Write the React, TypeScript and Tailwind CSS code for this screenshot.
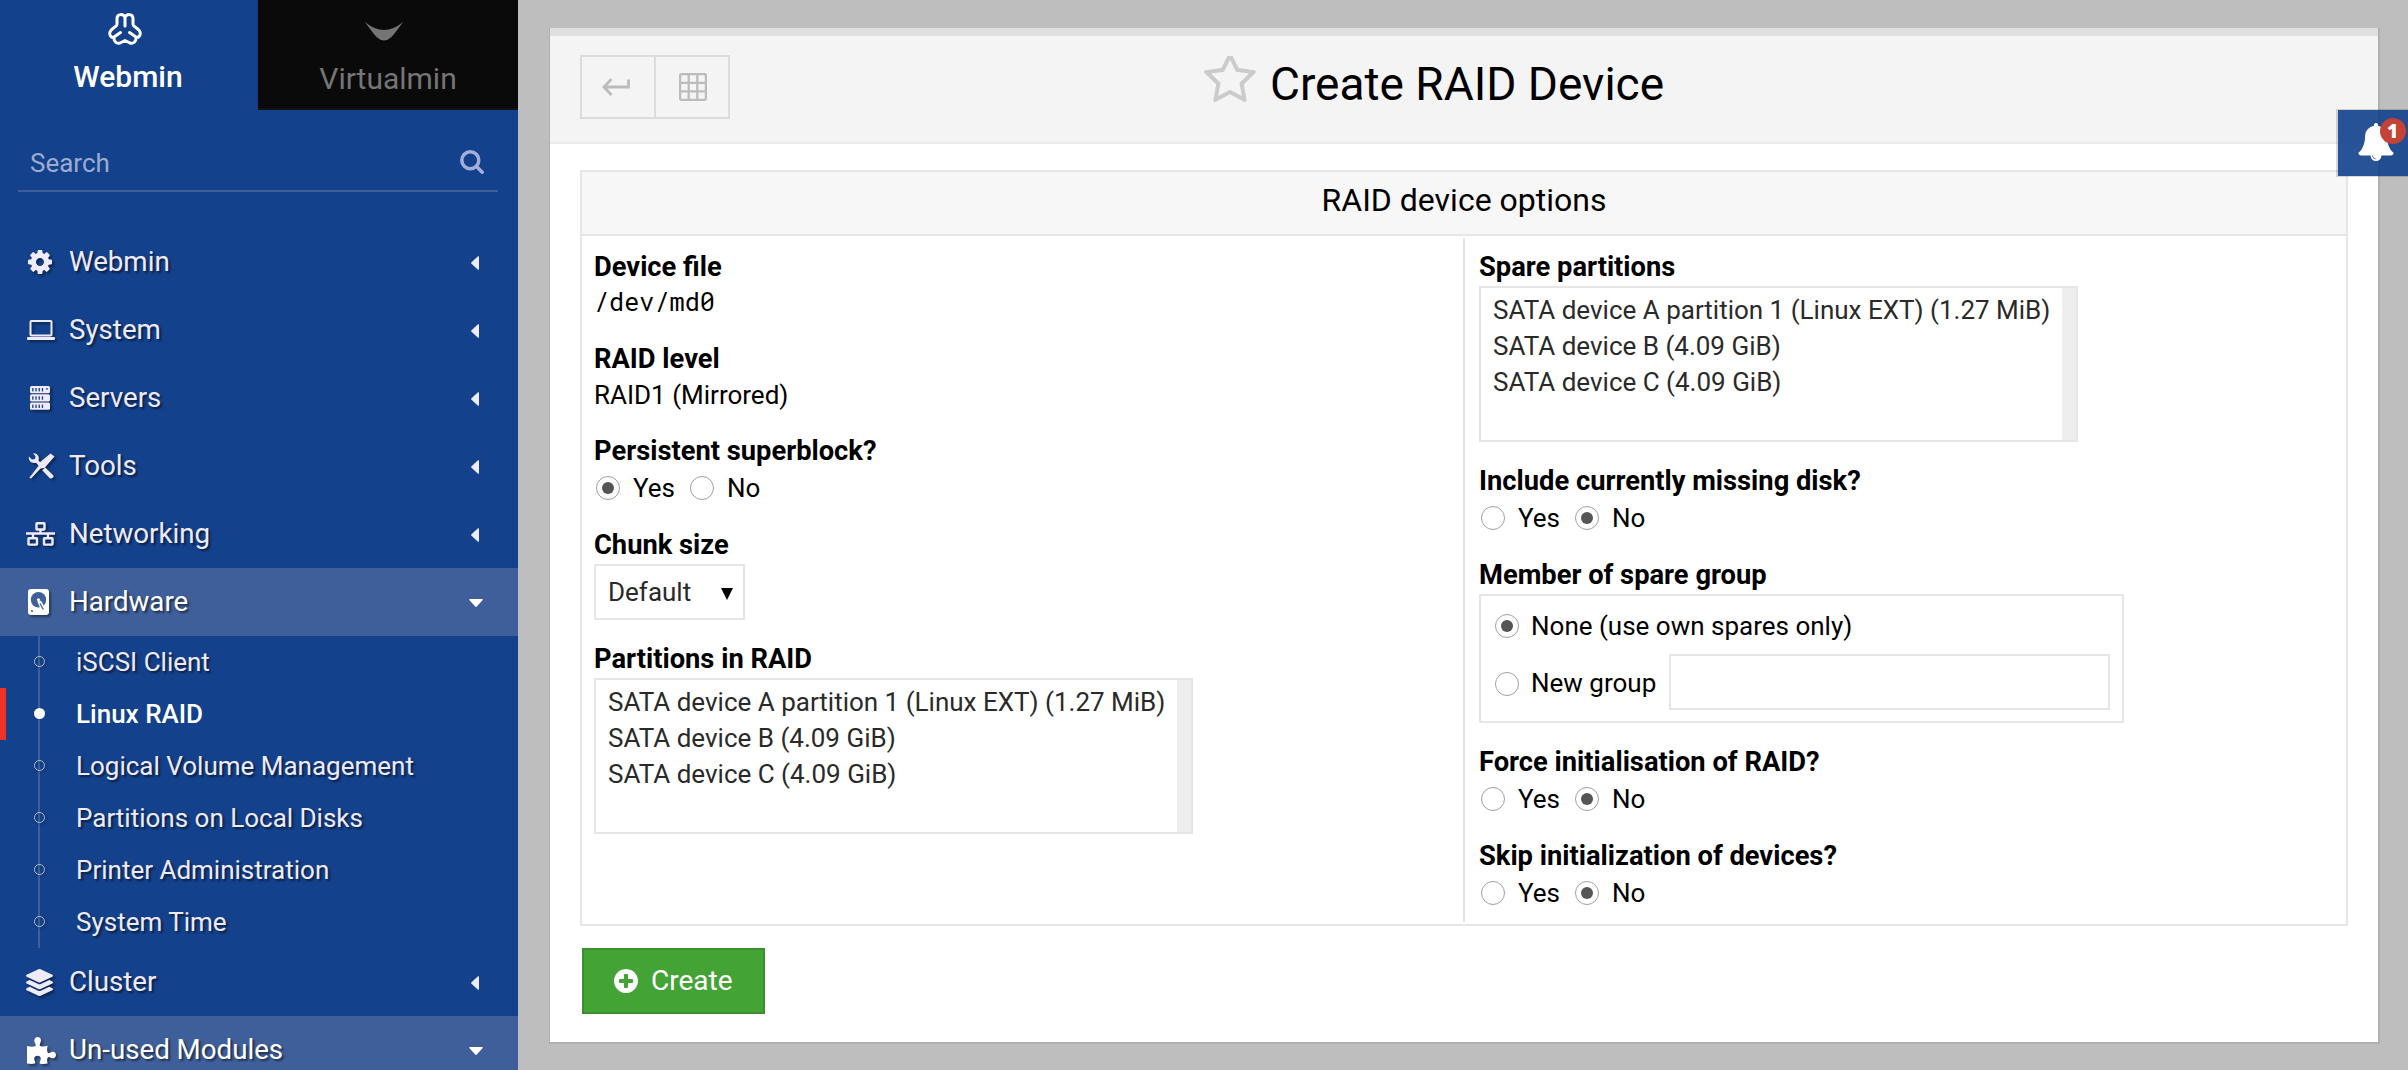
import React from "react";
import { FaLayerGroup } from "react-icons/fa";

const WebminLogo = () => (
  <svg viewBox="0 0 34 32" className="mr-[9px] h-8 w-[34px] fill-none stroke-white" strokeWidth="3" strokeLinecap="round" strokeLinejoin="round">
    <path d="M17 4.500C15.500 0.500 9 0.500 9 5.500V11.500C9 14 1.500 15.500 1.700 20.500C1.900 23.500 4 25 6 24C5.500 28 8.500 31.300 12 30L17 27.500L22 30C25.500 31.300 28.500 28 28 24C30 25 32.100 23.500 32.300 20.500C32.500 15.500 25 14 25 11.500V5.500C25 0.500 18.500 0.500 17 4.500V13M6 24L12.500 19.500M28 24L21.500 19.500" />
  </svg>
);

const GearIcon = () => (
  <svg viewBox="128 128 1536 1536" className="h-6 w-6 fill-current">
    <path d="M1152 896q0-106-75-181t-181-75-181 75-75 181 75 181 181 75 181-75 75-181zm512-109v222q0 12-8 23t-20 13l-185 28q-19 54-39 91 35 50 107 138 10 12 10 25t-9 23q-27 37-99 108t-94 71q-12 0-26-9l-138-108q-44 23-91 38-16 136-29 186-7 28-36 28h-222q-14 0-24.5-8.5t-11.5-21.5l-28-184q-49-16-90-37l-141 107q-10 9-25 9-14 0-25-11-126-114-165-168-7-10-7-23 0-12 8-23 15-21 51-66.5t54-70.5q-27-50-41-99l-183-27q-13-2-21-12.5t-8-23.5v-222q0-12 8-23t19-13l186-28q14-46 39-92-40-57-107-138-10-12-10-24 0-10 9-23 26-36 98.5-107.5t94.5-71.5q13 0 26 10l138 107q44-23 91-38 16-136 29-186 7-28 36-28h222q14 0 24.5 8.5t11.5 21.5l28 184q49 16 90 37l142-107q9-9 24-9 13 0 25 10 129 119 165 170 7 8 7 22 0 12-8 23-15 21-51 66.5t-54 70.5q26 50 41 98l183 28q13 2 21 12.5t8 23.5z" />
  </svg>
);

const LaptopIcon = () => (
  <svg viewBox="0 0 28 20" className="-ml-px h-5 w-7 fill-current">
    <path fillRule="evenodd" d="M4.500 0h19a2 2 0 0 1 2 2v12.500a2 2 0 0 1-2 2h-19a2 2 0 0 1-2-2v-12.500a2 2 0 0 1 2-2zM4.500 2v12.500h19v-12.500z" />
    <rect x="0" y="17" width="28" height="3" rx="1" />
  </svg>
);

const ServersIcon = () => (
  <svg viewBox="0 0 20 24" className="ml-0.5 h-6 w-5">
    {[0, 8.300, 16.600].map((y) => (
      <g key={y}>
        <rect x="0" y={y} width="20" height="7.200" rx="1.500" className="fill-current" />
        {[2.200, 5.400, 8.600, 11.800].map((x) => (
          <rect key={x} x={x} y={y + 2} width="1.300" height="3.400" fill="#13418b" />
        ))}
        {y === 0 && <circle cx="17" cy={y + 2.800} r="0.900" fill="#13418b" />}
      </g>
    ))}
  </svg>
);

const ToolsIcon = () => (
  <svg viewBox="0 0 27 26" className="h-[26px] w-[27px] fill-current">
    <path d="M22.500 0.500 26.500 3.500 16.500 15 12.500 15.500 3 25.500 1.300 24.700 10.500 13 11 10z" />
    <path d="M5 0.300C9 0 12 3.500 10.500 7.600L13 10.300 10.700 12.700 8 9.800C3.800 11 0.300 8 0.800 3.600L4 6.600 7 6 7.500 3.200z" />
    <path d="M17.300 14.500 25.200 22.300C26.300 24.300 23.800 26.300 21.800 25.300L14.200 17.300z" />
  </svg>
);

const NetworkIcon = () => (
  <svg viewBox="0 0 29 24" className="-ml-0.5 h-6 w-[29px] fill-none stroke-current" strokeWidth="2.400">
    <rect x="10.500" y="1.200" width="8" height="6.300" rx="0.500" />
    <path d="M0 11.500H29M14.500 8V12M7 12V16M22 12V16" />
    <rect x="2.500" y="16.300" width="8.500" height="6.300" rx="0.500" />
    <rect x="18" y="16.300" width="8.500" height="6.300" rx="0.500" />
  </svg>
);

const DiskIcon = () => (
  <svg viewBox="0 0 21 26" className="h-[26px] w-[21px]">
    <rect width="21" height="26" rx="3" className="fill-current" />
    <circle cx="10.500" cy="10.800" r="7.700" fill="#3f5f9a" />
    <circle cx="10.500" cy="10.800" r="1.600" className="fill-current" />
    <path d="M9.300 12.500 13 11.800 17.800 20 15.500 22.500 13 20.800z" className="fill-current" />
    <path d="M12 14.500 15.300 20.500" stroke="#3f5f9a" strokeWidth="1.300" />
    <circle cx="4" cy="22" r="1" fill="#3f5f9a" />
  </svg>
);

const PuzzleIcon = () => (
  <svg viewBox="0 0 29 27" className="-ml-px h-[27px] w-[29px] fill-current">
    <path d="M0 9C3 9.700 6 10 8.300 9.200C9.600 8.600 8 6.500 7.500 5C6.800 2.200 8.500 0 10.700 0C13 0 14.500 2 13.800 4.600C13.300 6.300 12 8.300 13.200 9C15.500 9.900 18.500 9.400 20.500 8.800C20.200 11 19.800 13.500 20.600 15.500C21.300 17 23 15.800 24.500 15C26.800 14 29 15.700 29 18C29 20.400 26.900 22 24.600 21C23 20.300 21.500 19.200 20.700 20.500C19.800 22.500 20.200 24.500 20.600 26.600C18.500 27 15.500 27.200 13.300 26.700C12 26.200 13 24.500 13.600 23C14.400 20.500 12.800 18.700 10.600 18.700C8.200 18.700 6.600 20.600 7.400 23C7.900 24.500 9 26 7.700 26.600C5.500 27.200 2.500 27 0 26.600z" />
  </svg>
);

const CaretLeft = () => (
  <svg viewBox="0 0 8 14" className="mr-[39px] h-[14px] w-2 fill-current">
    <path d="M7 0.300Q8 0 8 1V13Q8 14 7 13.700L0.500 7.800Q-0.100 7 0.500 6.200z" />
  </svg>
);

const CaretDown = () => (
  <svg viewBox="0 0 14 8" className="mr-[35px] h-2 w-[14px] fill-current">
    <path d="M0.300 1Q0 0 1 0H13Q14 0 13.700 1L7.800 7.500Q7 8.100 6.200 7.500z" />
  </svg>
);

function MenuRow({ icon, label, open = false }: { icon: React.ReactNode; label: string; open?: boolean }) {
  return (
    <div className={open ? "flex h-[68px] items-center bg-[#3f5f9a] text-white" : "flex h-[68px] items-center text-[#efeafc]"}>
      <span className="flex w-[69px] items-center pl-7 [filter:drop-shadow(2px_2px_1px_rgba(0,0,0,0.4))]">{icon}</span>
      <span className="grow text-[27.7px] [text-shadow:2px_2px_2px_rgba(0,0,0,0.5)]">{label}</span>
      <span className="pt-0.5">{open ? <CaretDown /> : <CaretLeft />}</span>
    </div>
  );
}

function SubItem({ label, active = false }: { label: string; active?: boolean }) {
  return (
    <li
      className={
        active
          ? "flex h-[52px] items-center border-l-[6px] border-[#ef3224] pl-7 text-white"
          : "flex h-[52px] items-center pl-[34px] text-[#efeafc]"
      }
    >
      <span
        className={
          active
            ? "z-10 mr-[31px] mb-px size-[11px] rounded-full bg-white"
            : "z-10 mr-[31px] mb-px size-[11px] rounded-full border-[1.5px] border-[#b4c0dc] [filter:drop-shadow(1px_1px_1px_rgba(0,0,0,0.4))]"
        }
      />
      <span className={active ? "text-[26px] font-medium" : "text-[26px] [text-shadow:2px_2px_2px_rgba(0,0,0,0.5)]"}>{label}</span>
    </li>
  );
}

const Dot = ({ on = false }: { on?: boolean }) => (
  <span className="flex size-6 shrink-0 items-center justify-center rounded-full border border-[#a0a0a0] bg-white">
    {on && <span className="size-3 rounded-full bg-[#555]" />}
  </span>
);

function YesNo({ value }: { value: "Yes" | "No" }) {
  return (
    <div className="flex h-[38px] items-center pt-0.5 pl-0.5">
      <Dot on={value === "Yes"} />
      <span className="ml-[13px]">Yes</span>
      <span className="ml-[15px]">
        <Dot on={value === "No"} />
      </span>
      <span className="ml-[13px]">No</span>
    </div>
  );
}

function Field({ label, children }: { label: string; children: React.ReactNode }) {
  return (
    <div>
      <div className="pt-0.5 text-[27.3px] leading-[34px] font-bold">{label}</div>
      {children}
    </div>
  );
}

const partitions = ["SATA device A partition 1 (Linux EXT) (1.27 MiB)", "SATA device B (4.09 GiB)", "SATA device C (4.09 GiB)"];

const PartitionList = () => (
  <div className="mt-0.5 flex h-[156px] w-[599px] border-2 border-[#e6e6e6] text-[#2a2a2a]">
    <ul className="grow pt-1 pl-3">
      {partitions.map((p) => (
        <li key={p} className="whitespace-nowrap">
          {p}
        </li>
      ))}
    </ul>
    <div className="w-[14px] bg-[#eee]" />
  </div>
);

function Sidebar() {
  return (
    <aside className="h-full w-[518px] shrink-0 bg-[#13418b]">
      <div className="flex h-[110px]">
        <div className="flex w-[258px] flex-col items-center pt-[13px] text-white">
          <WebminLogo />
          <span className="mt-[14px] mr-0.5 text-[30px] leading-9 font-medium">Webmin</span>
        </div>
        <div className="flex grow flex-col items-center border-b-2 border-[#141210] bg-[#0a0a0a] pt-[22px] text-[#757575]">
          <svg viewBox="0 0 38 19" className="mr-2 h-[19px] w-[38px] fill-current">
            <path d="M0 0Q19 16 38 0Q31 10 26.500 15Q19 22 11.500 15Q7 10 0 0z" />
          </svg>
          <span className="mt-5 text-[30px] leading-9">Virtualmin</span>
        </div>
      </div>
      <div className="mx-[18px] mt-[26px] mb-9 flex h-14 w-[480px] items-center justify-between border-b-2 border-[#3f5f9a] pr-[14px] pl-3">
        <span className="text-[26px] text-[#9bacd0]">Search</span>
        <svg viewBox="0 0 24 24" className="mb-[3px] size-6 fill-none stroke-[#a3aedb]" strokeWidth="3.500">
          <circle cx="10.300" cy="10.300" r="8.500" />
          <path d="M16.800 16.800 22.200 22.200" strokeLinecap="round" />
        </svg>
      </div>
      <nav>
        <MenuRow icon={<GearIcon />} label="Webmin" />
        <MenuRow icon={<LaptopIcon />} label="System" />
        <MenuRow icon={<ServersIcon />} label="Servers" />
        <MenuRow icon={<ToolsIcon />} label="Tools" />
        <MenuRow icon={<NetworkIcon />} label="Networking" />
        <MenuRow icon={<DiskIcon />} label="Hardware" open />
        <ul className="relative">
          <div className="absolute top-0 left-[38px] h-full w-0.5 bg-[#3f5f9a]" />
          <SubItem label="iSCSI Client" />
          <SubItem label="Linux RAID" active />
          <SubItem label="Logical Volume Management" />
          <SubItem label="Partitions on Local Disks" />
          <SubItem label="Printer Administration" />
          <SubItem label="System Time" />
        </ul>
        <MenuRow icon={<FaLayerGroup className="-ml-0.5 size-[27px]" />} label="Cluster" />
        <MenuRow icon={<PuzzleIcon />} label="Un-used Modules" open />
      </nav>
    </aside>
  );
}

function Header() {
  return (
    <header className="flex h-[108px] items-start border-b-2 border-[#ebebeb] bg-[#f4f4f4]">
      <div className="mt-[19px] ml-[30px] flex h-16 w-[150px] border-2 border-[#dcdcdc] text-[#bcbcbc]">
        <div className="flex w-[74px] items-center justify-center border-r-2 border-[#dcdcdc]">
          <svg viewBox="0 0 28 18" className="mr-1 h-[18px] w-7 fill-none stroke-current" strokeWidth="2.800">
            <path d="M9.500 1 2 9 9.500 17M2 9H26.500V1.500" />
          </svg>
        </div>
        <div className="flex grow items-center justify-center">
          <svg viewBox="0 0 28 28" className="ml-0.5 size-7 fill-none stroke-current" strokeWidth="2.300">
            <rect x="1.100" y="1.100" width="25.800" height="25.800" rx="1.500" />
            <path d="M9.700 1V27M18.300 1V27M1 9.800H27M1 18.300H27" />
          </svg>
        </div>
      </div>
      <svg viewBox="64 150 1664 1589" className="mt-[20px] ml-[474px] h-[50px] w-[52px] fill-[#cbcbcb]">
        <path d="M1201 1004l306-297-422-62-189-382-189 382-422 62 306 297-73 421 378-199 377 199zm527-357q0 22-26 48l-363 354 86 500q1 7 1 20 0 50-41 50-19 0-40-12l-449-236-449 236q-22 12-40 12-21 0-31.500-14.500t-10.500-35.500q0-6 2-20l86-500-364-354q-25-27-25-48 0-37 56-46l502-73 225-455q19-41 49-41t49 41l225 455 502 73q56 9 56 46z" />
      </svg>
      <h1 className="mt-[22px] ml-[14px] text-[46px] leading-[52px]">Create RAID Device</h1>
    </header>
  );
}

export default function App() {
  return (
    <div className="relative flex h-[1070px] w-[2408px] overflow-hidden bg-[#bebebe] font-['Roboto',sans-serif] text-black">
      <Sidebar />
      <main className="grow pt-7 pr-[30px] pl-8">
        <div className="h-[1014px] border-t-8 border-[#dfdfdf] bg-white shadow-[0_1px_0_1px_#b0b0b0,1px_1px_0_1px_#b0b0b0]">
          <Header />
          <div className="px-[30px] pt-[26px]">
            <section className="border-2 border-[#e6e6e6]">
              <h2 className="flex h-16 items-center justify-center border-b-2 border-[#e6e6e6] bg-[#f7f7f7] pb-[7px] text-[32px]">
                RAID device options
              </h2>
              <div className="flex h-[688px] text-[26px] leading-9">
                <div className="flex w-[881px] flex-col gap-5 pt-3 pl-3">
                  <Field label="Device file">
                    <div className="font-['Roboto_Mono','Liberation_Mono',monospace] text-[25.2px]">/dev/md0</div>
                  </Field>
                  <Field label="RAID level">
                    <div className="pt-0.5 leading-[34px]">RAID1 (Mirrored)</div>
                  </Field>
                  <Field label="Persistent superblock?">
                    <YesNo value="Yes" />
                  </Field>
                  <Field label="Chunk size">
                    <div className="mt-0.5 flex h-14 w-[151px] items-center justify-between border-2 border-[#e6e6e6] pr-[10px] pl-3 text-[#2a2a2a]">
                      <span>Default</span>
                      <svg viewBox="0 0 12 12" className="mt-[3px] size-3 fill-black">
                        <path d="M0 0H12L6 12z" />
                      </svg>
                    </div>
                  </Field>
                  <Field label="Partitions in RAID">
                    <PartitionList />
                  </Field>
                </div>
                <div className="my-0.5 flex grow flex-col gap-5 border-l-2 border-[#e6e6e6] pt-2.5 pl-[14px]">
                  <Field label="Spare partitions">
                    <PartitionList />
                  </Field>
                  <Field label="Include currently missing disk?">
                    <YesNo value="No" />
                  </Field>
                  <Field label="Member of spare group">
                    <div className="mt-0.5 flex h-[129px] w-[645px] flex-col gap-[10px] border-2 border-[#e6e6e6] pt-3 pr-3 pl-[14px]">
                      <div className="flex h-9 items-center">
                        <Dot on />
                        <span className="ml-3">None (use own spares only)</span>
                      </div>
                      <div className="flex h-14 items-center">
                        <span className="mt-1">
                          <Dot />
                        </span>
                        <span className="mt-0.5 ml-3">New group</span>
                        <div className="ml-auto h-14 w-[441px] border-2 border-[#e6e6e6]" />
                      </div>
                    </div>
                  </Field>
                  <Field label="Force initialisation of RAID?">
                    <YesNo value="No" />
                  </Field>
                  <Field label="Skip initialization of devices?">
                    <YesNo value="No" />
                  </Field>
                </div>
              </div>
            </section>
            <button className="mt-[22px] ml-0.5 flex h-[66px] w-[183px] items-center border-2 border-[#3a8f2e] bg-[#43a335] pl-[30px] text-[28px] text-white">
              <svg viewBox="128 128 1536 1536" className="mr-[13px] size-6 fill-current">
                <path d="M1344 960v-128q0-26-19-45t-45-19h-256v-256q0-26-19-45t-45-19h-128q-26 0-45 19t-19 45v256h-256q-26 0-45 19t-19 45v128q0 26 19 45t45 19h256v256q0 26 19 45t45 19h128q26 0 45-19t19-45v-256h256q26 0 45-19t19-45zm320-64q0 209-103 385.500t-279.500 279.500-385.500 103-385.500-103-279.500-279.500-103-385.500 103-385.500 279.500-279.500 385.500-103 385.500 103 279.500 279.500 103 385.500z" />
              </svg>
              Create
            </button>
          </div>
        </div>
      </main>
      <div className="absolute top-[110px] right-0 flex h-[66px] w-[70px] items-start bg-[rgba(17,65,140,0.9)] pt-[13px] pl-[20px] shadow-[-1px_0_0_1px_rgba(0,0,0,0.15)]">
        <svg viewBox="64 0 1664 1792" className="h-[38px] w-[36px] fill-white">
          <path d="M912 1696q0-16-16-16-59 0-101.500-42.500t-42.500-101.500q0-16-16-16t-16 16q0 73 51.500 124.500t124.500 51.500q16 0 16-16zm816-288q0 52-38 90t-90 38h-448q0 106-75 181t-181 75-181-75-75-181h-448q-52 0-90-38t-38-90q50-42 91-88t85-119.500 74.500-158.500 50-206 19.500-260q0-152 117-282.500t307-158.500q-8-19-8-39 0-40 28-68t68-28 68 28 28 68q0 20-8 39 190 28 307 158.500t117 282.500q0 139 19.500 260t50 206 74.500 158.500 85 119.500 91 88z" />
        </svg>
        <span className="absolute top-2 right-[2px] flex size-[26px] items-center justify-center rounded-full bg-[#c44336] pr-px font-['Open_Sans'] text-[19px] leading-none font-extrabold text-white">
          1
        </span>
      </div>
    </div>
  );
}
